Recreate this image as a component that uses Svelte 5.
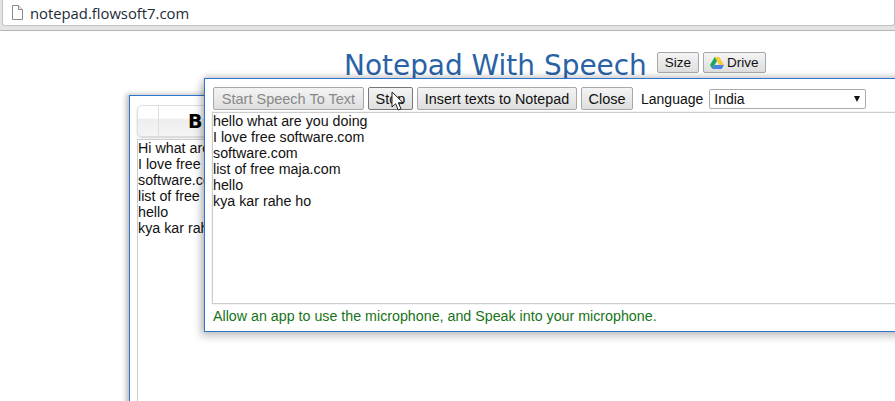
<script>
  const lines = ["hello what are you doing", "I love free software.com", "software.com", "list of free maja.com", "hello", "kya kar rahe ho"];
  const behind = ["Hi what are you doing", "I love free software.com", "software.com", "list of free maja.com", "hello", "kya kar rahe ho"];
</script>

<div class="page">
  <header class="chrome">
    <div class="address">
      <svg class="doc" width="12" height="15" viewBox="0 0 12 15">
        <path d="M1.5.5h6l4 4v10h-10z" fill="#fff" stroke="#8a8a8a" />
        <path d="M7.5.5v4h4" fill="#eee" stroke="#8a8a8a" />
      </svg>
      <span>notepad.flowsoft7.com</span>
    </div>
  </header>

  <div class="title-row">
    <h1>Notepad With Speech</h1>
    <button class="btn small">Size</button>
    <button class="btn small drive">
      <svg width="14" height="12" viewBox="0 0 14 12">
        <path d="M4.7 0h4.6l4.7 8H9.4z" fill="#fbc934" />
        <path d="M4.7 0 0 8l2.3 4 4.7-8z" fill="#1fa463" />
        <path d="M4.6 8H14l-2.3 4H2.3z" fill="#4a80e8" />
      </svg>
      Drive
    </button>
  </div>

  <section class="notepad">
    <div class="toolbar">
      <span class="cell"></span>
      <b>B</b>
    </div>
    <div class="sheet">
      {#each behind as line}
        <div>{line}</div>
      {/each}
    </div>
  </section>

  <section class="popup">
    <div class="controls">
      <button class="btn start" disabled>Start Speech To Text</button>
      <button class="btn stop">Stop</button>
      <button class="btn insert">Insert texts to Notepad</button>
      <button class="btn close">Close</button>
      <span class="lang">Language</span>
      <div class="select">
        <span>India</span>
        <i></i>
      </div>
    </div>
    <div class="text">
      {#each lines as line}
        <div>{line}</div>
      {/each}
    </div>
    <p class="hint">Allow an app to use the microphone, and Speak into your microphone.</p>
  </section>

  <svg class="cursor" width="14" height="21" viewBox="0 0 14 21">
    <path d="M1 1v15l3.6-3.3 2.6 6.3 2.8-1.2-2.7-6.1H12z" fill="#fff" stroke="#222" stroke-width="1" />
  </svg>
</div>

<style>
  :global(body) {
    margin: 0;
    background: #fff;
    overflow: hidden;
  }

  .page {
    position: relative;
    width: 895px;
    height: 401px;
    overflow: hidden;
    font-family: "Liberation Sans", Arial, sans-serif;
    font-size: 14.25px;
    color: #111;
  }

  .chrome {
    height: 26px;
    padding: 0 0 4px 2px;
    background: #e4e4e4;
    border-bottom: 1px solid #b4b4b4;
    box-sizing: content-box;
  }

  .address {
    height: 26px;
    background: #fff;
    border: 1px solid #c4c4c4;
    border-top: 0;
    border-radius: 0 0 3px 3px;
    display: flex;
    align-items: center;
    gap: 7px;
    padding-left: 8px;
    box-sizing: border-box;
    font-family: "Open Sans", sans-serif;
    font-size: 14.8px;
    color: #1c2b3a;
  }

  .doc {
    flex: none;
  }

  .title-row {
    display: flex;
    align-items: center;
    gap: 4px;
    height: 61px;
    padding-left: 344px;
    box-sizing: border-box;
    margin-top: 3px;
  }

  h1 {
    margin: 2px 6px 0 0;
    font-family: "DejaVu Sans", Verdana, sans-serif;
    font-weight: 400;
    font-size: 27.95px;
    color: #2a62a6;
    white-space: nowrap;
  }

  .btn {
    height: 23px;
    padding: 0;
    border: 1px solid #a8a8a8;
    border-radius: 2px;
    background: linear-gradient(#f4f4f4, #dedede);
    font-family: inherit;
    font-size: 14.5px;
    color: #111;
    white-space: nowrap;
  }

  .btn:disabled {
    color: #888;
  }

  .start {
    width: 151px;
  }

  .stop {
    width: 45px;
    border-color: #777;
  }

  .insert {
    width: 160px;
    font-size: 14.35px;
  }

  .close {
    width: 52px;
  }

  .small {
    height: 21px;
    padding: 0 7px;
    font-size: 13.5px;
    margin-bottom: 4px;
  }

  .drive {
    display: flex;
    align-items: center;
    gap: 3px;
    padding: 0 6px;
  }

  .notepad {
    width: 900px;
    height: 320px;
    margin: 0 0 0 129px;
    border: solid #2f74d0;
    border-width: 1px 0 0 1px;
    box-shadow: -3px -1px 5px rgba(0, 0, 0, 0.25);
    padding: 9px 0 0 7px;
    box-sizing: border-box;
  }

  .toolbar {
    height: 32px;
    width: 300px;
    border: 1px solid #ddd;
    border-radius: 5px;
    background: linear-gradient(#fff 40%, #eee 45%, #f4f4f4);
    display: flex;
    align-items: center;
    box-sizing: border-box;
    box-shadow: 0 1px 2px rgba(0, 0, 0, 0.2);
  }

  .cell {
    width: 20px;
    height: 100%;
    border-right: 1px solid #ddd;
    margin-right: 29px;
  }

  .toolbar b {
    font-family: "DejaVu Sans", sans-serif;
    font-weight: 900;
    font-size: 19px;
    color: #000;
  }

  .sheet {
    margin-top: 2px;
    height: 280px;
    border-left: 1px solid #ccc;
    border-top: 1px solid #ccc;
    line-height: 16px;
    white-space: nowrap;
  }

  .popup {
    position: absolute;
    left: 204px;
    top: 78px;
    width: 720px;
    height: 254px;
    background: #fff;
    border: 1px solid #2f74d0;
    box-sizing: border-box;
    box-shadow: -3px 4px 8px rgba(0, 0, 0, 0.25), 0 -3px 5px rgba(0, 0, 0, 0.15);
    padding: 8px 0 0 7px;
  }

  .controls {
    display: flex;
    align-items: center;
    gap: 4px;
    height: 23px;
    padding-left: 1px;
  }

  .lang {
    margin-left: 4px;
    font-size: 14px;
  }

  .select {
    position: relative;
    width: 157px;
    height: 20px;
    margin-left: 2px;
    border: 1px solid #aaa;
    border-radius: 2px;
    box-sizing: border-box;
    padding-left: 4px;
    line-height: 18px;
    font-size: 14px;
  }

  .select i {
    position: absolute;
    right: 5px;
    top: 6px;
    border: 3.5px solid transparent;
    border-top: 6px solid #111;
    border-bottom: 0;
  }

  .text {
    margin-top: 2px;
    height: 192px;
    border: 1px solid #ccc;
    border-right: 0;
    box-sizing: border-box;
    line-height: 16px;
    box-shadow: 0 0 1px #bbb;
  }

  .hint {
    margin: 3px 0 0 1px;
    line-height: 18px;
    color: #177317;
  }

  .cursor {
    position: absolute;
    left: 391px;
    top: 91px;
  }
</style>
